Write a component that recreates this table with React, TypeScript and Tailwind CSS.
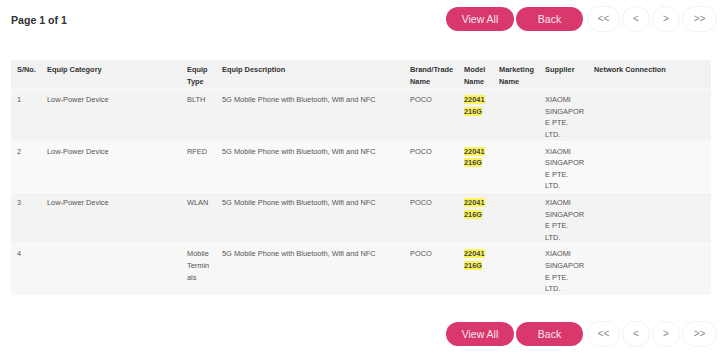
import React from "react";

type Row = {
  no: string;
  cat: string;
  type: string;
  desc: string;
  brand: string;
  model: string;
  marketing: string;
  supplier: string;
  network: string;
};

const rows: Row[] = [
  { no: "1", cat: "Low-Power Device", type: "BLTH", desc: "5G Mobile Phone with Bluetooth, Wifi and NFC", brand: "POCO", model: "22041216G", marketing: "", supplier: "XIAOMI SINGAPORE PTE. LTD.", network: "" },
  { no: "2", cat: "Low-Power Device", type: "RFED", desc: "5G Mobile Phone with Bluetooth, Wifi and NFC", brand: "POCO", model: "22041216G", marketing: "", supplier: "XIAOMI SINGAPORE PTE. LTD.", network: "" },
  { no: "3", cat: "Low-Power Device", type: "WLAN", desc: "5G Mobile Phone with Bluetooth, Wifi and NFC", brand: "POCO", model: "22041216G", marketing: "", supplier: "XIAOMI SINGAPORE PTE. LTD.", network: "" },
  { no: "4", cat: "", type: "Mobile Terminals", desc: "5G Mobile Phone with Bluetooth, Wifi and NFC", brand: "POCO", model: "22041216G", marketing: "", supplier: "XIAOMI SINGAPORE PTE. LTD.", network: "" },
];

const rowBg = ["bg-[#f3f3f3]", "bg-[#f9f9f9]", "bg-[#f3f3f3]", "bg-[#f7f7f7]"];

function Controls() {
  return (
    <div className="flex items-center">
      <button className="w-[68px] h-[24px] rounded-full bg-[#d8386b] text-[#fde6ee] text-[10.5px] leading-none">
        View All
      </button>
      <button className="ml-[2px] w-[67px] h-[24px] rounded-full bg-[#d8386b] text-[#fde6ee] text-[10.5px] leading-none">
        Back
      </button>
      <div className="ml-[4px] flex items-center gap-[2px] text-[10px] text-[#888]">
        <button className="w-[33px] h-[26px] rounded-full border border-[#f3f3f3] bg-white leading-none">&lt;&lt;</button>
        <button className="w-[28px] h-[26px] rounded-full border border-[#f3f3f3] bg-white leading-none">&lt;</button>
        <button className="w-[28px] h-[26px] rounded-full border border-[#f3f3f3] bg-white leading-none">&gt;</button>
        <button className="w-[35px] h-[26px] rounded-full border border-[#f3f3f3] bg-white leading-none">&gt;&gt;</button>
      </div>
    </div>
  );
}

export default function App() {
  const th = "text-left align-top font-bold text-[#333] pl-[6px] pt-[4px] pb-[2px]";
  const td = "align-top pl-[6px] pt-[4px] pb-0 [overflow-wrap:anywhere]";
  return (
    <div
      className="w-[725px] h-[357px] bg-white pl-[11px] pr-[8px] pt-[6px] overflow-hidden"
      style={{ fontFamily: '"Liberation Sans", Arial, Helvetica, sans-serif' }}
    >
      <div className="flex items-center justify-between h-[26px]">
        <div className="text-[10.6px] font-bold text-[#333] pt-[4px]">Page 1 of 1</div>
        <Controls />
      </div>

      <table className="mt-[28px] w-[700px] table-fixed border-collapse text-[7.4px] leading-[11.6px] text-[#555]">
        <colgroup>
          <col className="w-[30px]" />
          <col className="w-[140px]" />
          <col className="w-[35px]" />
          <col className="w-[188px]" />
          <col className="w-[54px]" />
          <col className="w-[35px]" />
          <col className="w-[46px]" />
          <col className="w-[49px]" />
          <col className="w-[123px]" />
        </colgroup>
        <thead>
          <tr className="bg-[#f2f2f2]">
            <th className={th}>S/No.</th>
            <th className={th}>Equip Category</th>
            <th className={`${th} pr-[5px]`}>Equip Type</th>
            <th className={th}>Equip Description</th>
            <th className={th}>Brand/Trade Name</th>
            <th className={`${th} pr-[7px]`}>Model Name</th>
            <th className={th}>Marketing Name</th>
            <th className={th}>Supplier</th>
            <th className={th}>Network Connection</th>
          </tr>
        </thead>
        <tbody>
          {rows.map((r, i) => (
            <tr key={r.no} className={`${rowBg[i]} border-t border-[#fbfbfb]`}>
              <td className={td}>{r.no}</td>
              <td className={td}>{r.cat}</td>
              <td className={`${td} pr-[5px]`}>{r.type}</td>
              <td className={td}>{r.desc}</td>
              <td className={td}>{r.brand}</td>
              <td className={`${td} pr-[7px]`}>
                <span className="bg-[#fbf35a] text-[#444] font-semibold">{r.model}</span>
              </td>
              <td className={td}>{r.marketing}</td>
              <td className={`${td} pr-[3px]`}>
                <div className="min-h-[46.4px]">{r.supplier}</div>
              </td>
              <td className={td}>{r.network}</td>
            </tr>
          ))}
        </tbody>
      </table>

      <div className="mt-[26px] flex justify-end">
        <Controls />
      </div>
    </div>
  );
}
